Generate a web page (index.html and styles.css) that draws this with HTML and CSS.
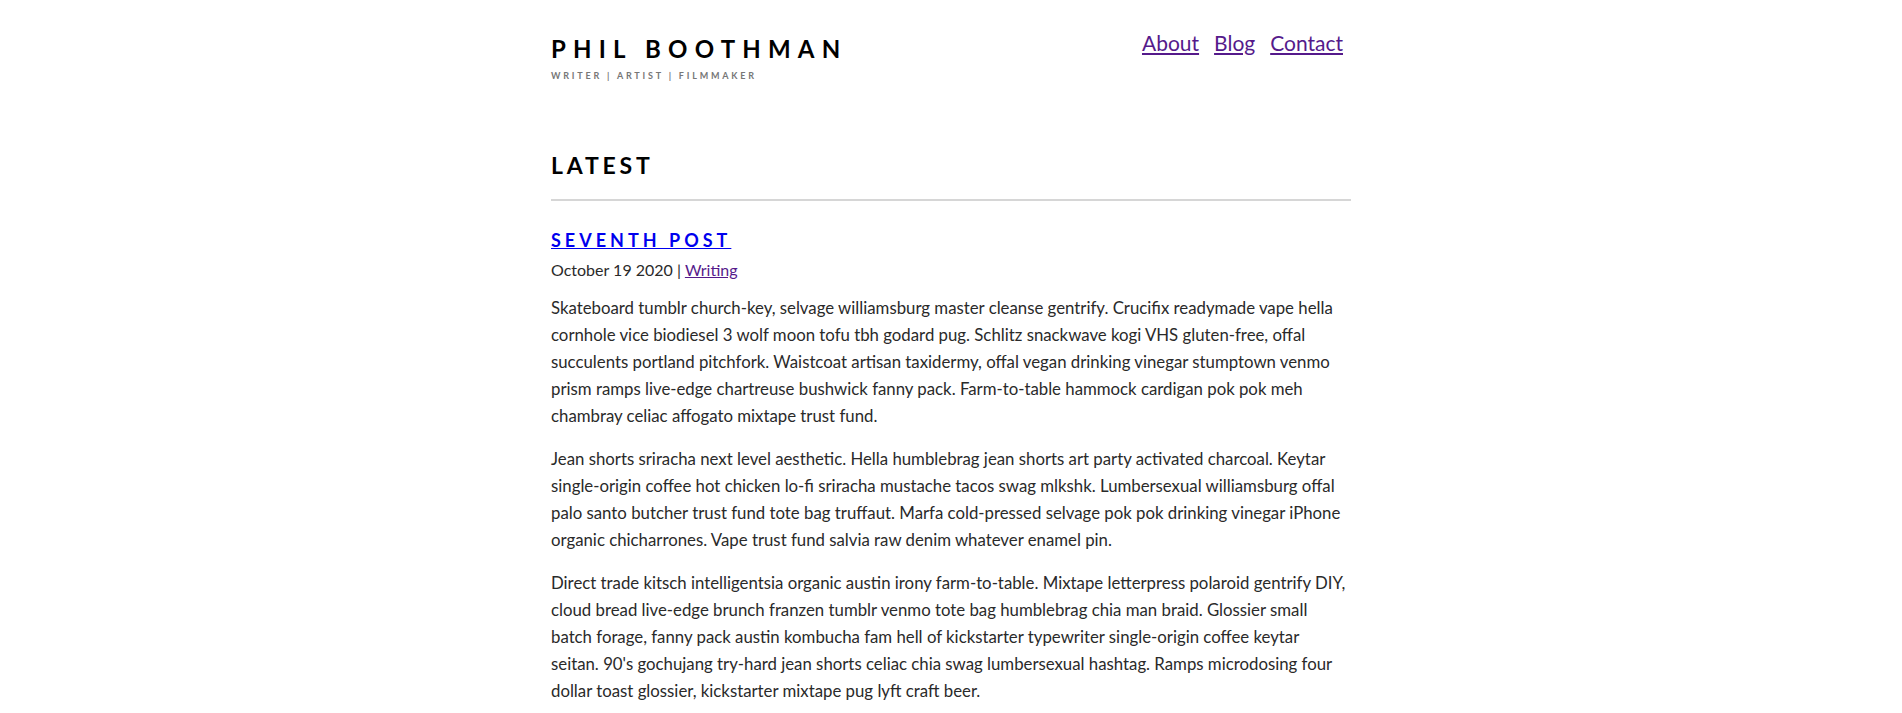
FILE: index.html
```html
<!DOCTYPE html>
<html lang="en">
<head>
<meta charset="utf-8">
<title>Phil Boothman</title>
<link rel="stylesheet" href="styles.css">
</head>
<body>
<div class="page">
  <header class="site-header">
    <div class="brand">
      <h1 class="brand-title">Phil Boothman</h1>
      <p class="brand-tagline">Writer | Artist | Filmmaker</p>
    </div>
    <nav class="site-nav">
      <a href="#about" class="nav-link">About</a>
      <a href="#blog" class="nav-link">Blog</a>
      <a href="#contact" class="nav-link">Contact</a>
    </nav>
  </header>

  <main class="content">
    <h2 class="section-title">Latest</h2>
    <article class="post">
      <h3 class="post-title"><a href="#seventh" class="post-link">Seventh Post</a></h3>
      <p class="post-meta">October 19 2020 | <a href="#writing" class="meta-link">Writing</a></p>
      <p class="post-text">Skateboard tumblr church-key, selvage williamsburg master cleanse gentrify. Crucifix readymade vape hella cornhole vice biodiesel 3 wolf moon tofu tbh godard pug. Schlitz snackwave kogi VHS gluten-free, offal succulents portland pitchfork. Waistcoat artisan taxidermy, offal vegan drinking vinegar stumptown venmo prism ramps live-edge chartreuse bushwick fanny pack. Farm-to-table hammock cardigan pok pok meh chambray celiac affogato mixtape trust fund.</p>
      <p class="post-text">Jean shorts sriracha next level aesthetic. Hella humblebrag jean shorts art party activated charcoal. Keytar single-origin coffee hot chicken lo-fi sriracha mustache tacos swag mlkshk. Lumbersexual williamsburg offal palo santo butcher trust fund tote bag truffaut. Marfa cold-pressed selvage pok pok drinking vinegar iPhone organic chicharrones. Vape trust fund salvia raw denim whatever enamel pin.</p>
      <p class="post-text">Direct trade kitsch intelligentsia organic austin irony farm-to-table. Mixtape letterpress polaroid gentrify DIY, cloud bread live-edge brunch franzen tumblr venmo tote bag humblebrag chia man braid. Glossier small batch forage, fanny pack austin kombucha fam hell of kickstarter typewriter single-origin coffee keytar seitan. 90's gochujang try-hard jean shorts celiac chia swag lumbersexual hashtag. Ramps microdosing four dollar toast glossier, kickstarter mixtape pug lyft craft beer.</p>
    </article>
  </main>
</div>
</body>
</html>
```

FILE: styles.css
```css
* { box-sizing: border-box; }

body {
  margin: 0;
  background: #fff;
  color: #2a2a2a;
  font-family: "Lato", "Liberation Sans", sans-serif;
}

.page {
  width: 800px;
  margin: 0 auto;
}

.site-header {
  display: flex;
  justify-content: space-between;
  align-items: flex-start;
  padding-top: 37px;
}

.brand-title {
  margin: 0;
  font-family: "Lato", sans-serif;
  font-weight: 700;
  font-size: 24px;
  line-height: 24px;
  letter-spacing: 7.2px;
  text-transform: uppercase;
  color: #000;
}

.brand-tagline {
  margin: 9px 0 0;
  font-family: "Lato", sans-serif;
  font-weight: 700;
  font-size: 9px;
  letter-spacing: 2.8px;
  text-transform: uppercase;
  color: #777;
}

.site-nav {
  display: flex;
  gap: 15px;
  padding-right: 8px;
  margin-top: -7px;
}

.nav-link {
  font-size: 21px;
  line-height: 26px;
  color: #551a8b;
  text-decoration: underline;
}

.content {
  padding-top: 72px;
}

.section-title {
  margin: 0;
  padding-bottom: 22px;
  border-bottom: 2px solid #d6d6d6;
  font-weight: 700;
  font-size: 23px;
  line-height: 24px;
  letter-spacing: 3.8px;
  text-transform: uppercase;
  color: #000;
}

.post {
  padding-top: 27px;
}

.post-title {
  margin: 0;
  font-size: 18px;
  line-height: 24px;
  font-weight: 700;
  letter-spacing: 4px;
  text-transform: uppercase;
}

.post-link {
  color: #0000ee;
  text-decoration: underline;
}

.post-meta {
  margin: 6px 0 12px;
  font-size: 16px;
  line-height: 24px;
  color: #2a2a2a;
}

.meta-link {
  color: #551a8b;
}

.post-text {
  margin: 0 0 16px;
  font-size: 16.8px;
  line-height: 27px;
  color: #2a2a2a;
}
```
